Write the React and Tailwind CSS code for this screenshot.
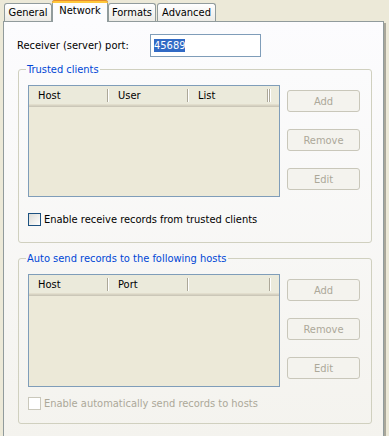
import React from "react";

const font = "font-['DejaVu_Sans_Condensed','Liberation_Sans',sans-serif] text-[11px] leading-[13px]";

const Tab = ({ label, active, w }) =>
  active ? (
    <div
      className="relative z-10 -mb-px h-[22px] rounded-t-[3px] border border-b-0 border-[#919B9C] bg-[#FCFCFE] text-center"
      style={{ width: w }}
    >
      <div className="-mx-px -mt-px h-[3px] rounded-t-[3px] border-t border-[#E68B2C] bg-[#FFC83C]" />
      <div className="pt-[1px] text-black">{label}</div>
    </div>
  ) : (
    <div
      className="h-[18px] rounded-t-[3px] border border-b-0 border-[#919B9C] bg-gradient-to-b from-white to-[#ECEBE6] pt-[2px] text-center text-black"
      style={{ width: w }}
    >
      {label}
    </div>
  );

const Button = ({ label }) => (
  <div className="flex h-[22px] w-[73px] items-center justify-center rounded-[3px] border border-[#C9C7BA] bg-[#F4F3EE] text-[#ACA899]">
    {label}
  </div>
);

const Sep = () => (
  <div className="flex h-[13px] w-[2px] self-center">
    <div className="w-px bg-[#ACA899]" />
    <div className="w-px bg-white" />
  </div>
);

const ListView = ({ cols, height }) => (
  <div className="w-[252px] border border-[#7F9DB9] bg-[#ECE9D8]" style={{ height }}>
    <div className="flex h-[18px] bg-[#EBEADB]">
      {cols.map((c, i) => (
        <React.Fragment key={i}>
          <div className="flex w-[78px] items-center pl-[9px] text-black">{c}</div>
          <Sep />
        </React.Fragment>
      ))}
      <div className="flex-1" />
      <Sep />
      <div className="w-[8px]" />
    </div>
    <div className="h-px bg-[#E2DECD]" />
    <div className="h-px bg-[#D6D2C2]" />
    <div className="h-px bg-[#CBC7B8]" />
  </div>
);

const Group = ({ title, cols, listH, check, disabled, height, checkGap }) => (
  <fieldset
    className="mx-[14px] w-[354px] rounded-[3px] border border-[#D0D0BF] px-[9px]"
    style={{ height }}
  >
    <legend className="-ml-[2px] px-[1px] text-[#0046D5]">{title}</legend>
    <div className="mt-[9px] flex">
      <ListView cols={cols} height={listH} />
      <div className="ml-[7px] mt-[5px] flex flex-col gap-[17px]">
        <Button label="Add" />
        <Button label="Remove" />
        <Button label="Edit" />
      </div>
    </div>
    <div className="flex items-center" style={{ marginTop: checkGap }}>
      <div
        className={
          disabled
            ? "h-[13px] w-[13px] border border-[#CAC8BB] bg-white"
            : "h-[13px] w-[13px] border border-[#1C5180] bg-gradient-to-br from-[#DCDCD7] to-white"
        }
      />
      <span className={"ml-[3px] " + (disabled ? "text-[#ACA899]" : "text-black")}>{check}</span>
    </div>
  </fieldset>
);

export default function App() {
  return (
    <div className={`h-[436px] w-[389px] overflow-hidden bg-[#ECE9D8] ${font}`}>
      <div className="flex h-[21px] items-end pl-[4px]">
        <Tab label="General" w={48} />
        <Tab label="Network" w={56} active />
        <Tab label="Formats" w={48} />
        <div className="w-px" />
        <Tab label="Advanced" w={59} />
      </div>
      <div className="ml-[3px] flex">
        <div className="h-[420px] w-[381px] border border-[#919B9C] bg-gradient-to-b from-[#FCFCFE] to-[#F4F3EE]">
          <div className="mt-[12px] flex items-center pl-[13px]">
            <span className="w-[133px] text-black">Receiver (server) port:</span>
            <div className="flex h-[23px] w-[111px] items-center border border-[#7F9DB9] bg-white pl-[3px]">
              <span className="bg-[#316AC5] text-white">45689</span>
            </div>
          </div>
          <div className="mt-[6px]">
            <Group
              title="Trusted clients"
              cols={["Host", "User", "List"]}
              listH={112}
              check="Enable receive records from trusted clients"
              height={180}
              checkGap={16}
            />
          </div>
          <div className="mt-[9px]">
            <Group
              title="Auto send records to the following hosts"
              cols={["Host", "Port"]}
              listH={113}
              check="Enable automatically send records to hosts"
              disabled
              height={172}
              checkGap={10}
            />
          </div>
        </div>
        <div className="mt-[2px] h-[420px] w-[2px] bg-[#A9A79A]" />
      </div>
    </div>
  );
}
